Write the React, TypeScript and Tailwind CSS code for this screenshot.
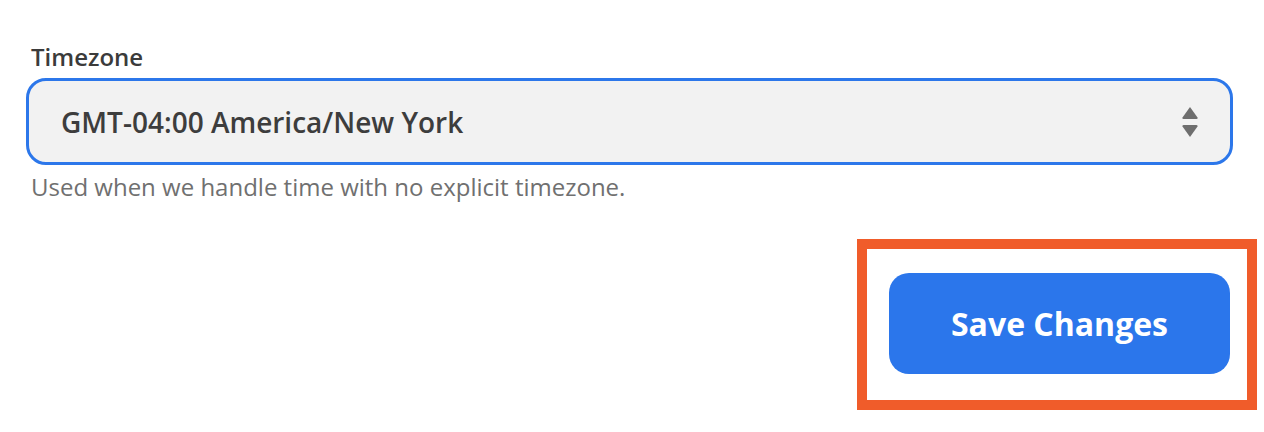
import React from "react";

export default function App() {
  return (
    <div
      className="w-[1264px] h-[432px] bg-white overflow-hidden"
      style={{ fontFamily: '"Open Sans", "Noto Sans", sans-serif' }}
    >
      <div className="pl-[26px] pr-[31px] pt-[41px]">
        <div className="pl-[5px] text-[24px] leading-[32px] font-semibold text-[#3b3b3b]">
          Timezone
        </div>
        <div className="mt-[5px] h-[87px] rounded-[20px] border-[3px] border-[#2c77ea] bg-[#f2f2f2] flex items-center justify-between pl-[32px] pr-[31px]">
          <span className="text-[28px] font-semibold text-[#3d3d3d] leading-[28px]">
            GMT-04:00 America/New York
          </span>
          <svg width="18" height="34" viewBox="0 0 18 34" className="block">
            <path
              d="M9 2 L16.5 12.5 Q17 14 15.5 14 L2.5 14 Q1 14 1.5 12.5 Z"
              fill="#6e6e6e"
            />
            <path
              d="M9 32 L16.5 21.5 Q17 20 15.5 20 L2.5 20 Q1 20 1.5 21.5 Z"
              fill="#6e6e6e"
            />
          </svg>
        </div>
        <div className="pl-[5px] mt-[6px] text-[24px] leading-[32px] text-[#707070]">
          Used when we handle time with no explicit timezone.
        </div>
        <div className="flex justify-end mr-[-24px] mt-[36px]">
          <div className="border-[10px] border-[#f05c2a] pl-[22px] pr-[17px] pt-[24px] pb-[26px]">
            <button className="w-[341px] h-[101px] rounded-[20px] bg-[#2b76eb] text-white text-[32px] font-bold flex items-center justify-center">
              Save Changes
            </button>
          </div>
        </div>
      </div>
    </div>
  );
}
